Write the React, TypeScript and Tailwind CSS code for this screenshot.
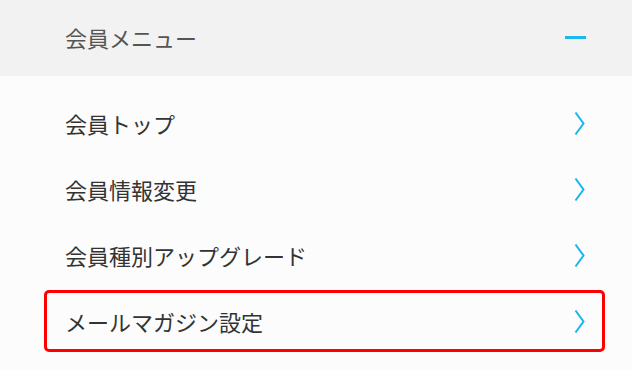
const ITEMS = ["会員トップ", "会員情報変更", "会員種別アップグレード", "メールマガジン設定"];

function Chevron() {
  return (
    <svg width="11" height="25" viewBox="0 0 11 25" fill="none" className="shrink-0">
      <polyline points="1.5,1.5 9.5,12.5 1.5,23.5" stroke="#17b4ed" strokeWidth="2" strokeLinejoin="miter" />
    </svg>
  );
}

export default function App() {
  return (
    <div
      className="w-[632px] h-[370px] overflow-hidden bg-[#fcfcfc]"
      style={{ fontFamily: '"Noto Sans CJK JP", "Noto Sans", sans-serif' }}
    >
      <div className="h-[76px] bg-[#f2f2f2] flex items-center justify-between pl-[65px] pr-[46px] pb-[2px]">
        <span className="text-[22px] text-[#555555] leading-none">会員メニュー</span>
        <span className="block w-[21px] h-[3px] bg-[#1cb8f0]" />
      </div>
      <div className="pl-[44px] pr-[27px] pt-[16px] flex flex-col gap-[4px]">
        {ITEMS.map((label, i) => (
          <div
            key={label}
            className={
              i === 3
                ? "h-[62px] flex items-center justify-between pl-[18px] pr-[17px] border-[3px] border-[#ff0000] rounded-[5px]"
                : "h-[62px] flex items-center justify-between pl-[18px] pr-[17px] border-[3px] border-transparent rounded-[5px]"
            }
          >
            <span className="text-[22px] text-[#333333] leading-none">{label}</span>
            <Chevron />
          </div>
        ))}
      </div>
    </div>
  );
}
